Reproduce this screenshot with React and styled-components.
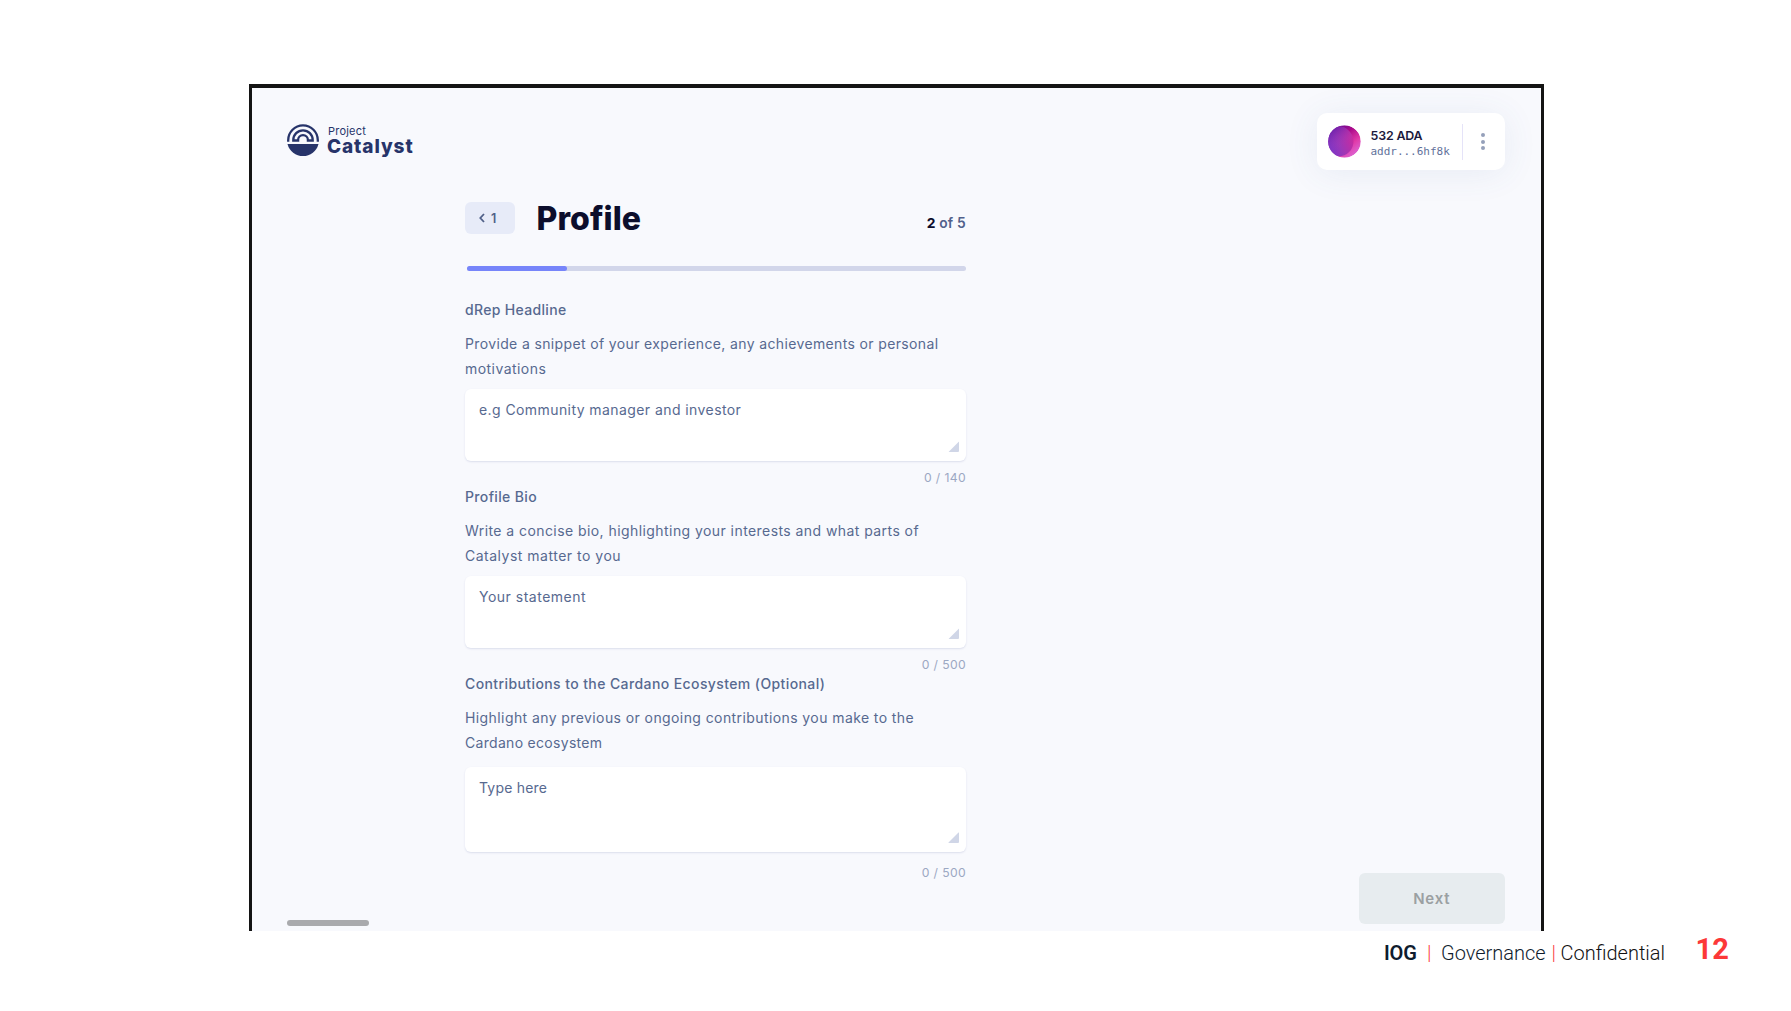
import React from "react";
import styled, { createGlobalStyle } from "styled-components";

const sans = `Inter, "Noto Sans", sans-serif`;

const GlobalStyle = createGlobalStyle`
  * { box-sizing: border-box; }
  body { margin: 0; background: #fff; font-family: ${sans}; }
  h1, p { margin: 0; }
`;

const Slide = styled.div`
  width: 1791px;
  height: 1011px;
  padding-top: 84px;
  overflow: hidden;
  background: #fff;
`;

const AppFrame = styled.section`
  display: flex;
  flex-direction: column;
  width: 1295px;
  height: 847px;
  margin-left: 249px;
  border: solid #141414;
  border-width: 4px 3px 0 3px;
  background: #f8f9fd;
`;

const Header = styled.header`
  display: flex;
  justify-content: space-between;
  align-items: flex-start;
  padding: 25px 36px 0 35px;
`;

const Brand = styled.div`
  display: flex;
  gap: 9px;
  margin-top: 11px;
  color: #27346a;
`;

const BrandName = styled.div`
  display: flex;
  flex-direction: column;
`;

const BrandTop = styled.span`
  font-size: 11px;
  line-height: 14px;
  letter-spacing: 0.22px;
`;

const BrandMain = styled.span`
  margin-left: -1px;
  font-size: 19px;
  font-weight: 800;
  line-height: 18px;
  letter-spacing: 0.9px;
`;

const Wallet = styled.div`
  display: flex;
  align-items: center;
  width: 188px;
  height: 57px;
  padding-left: 10.5px;
  border-radius: 10px;
  background: #fff;
  box-shadow: 0 3px 34px rgba(70, 95, 150, 0.09);
`;

const WalletText = styled.div`
  display: flex;
  flex-direction: column;
  width: 91px;
  margin: 3px 0 0 10px;
`;

const Balance = styled.span`
  color: #1b1a3d;
  font-size: 12.4px;
  font-weight: 600;
  line-height: 17px;
  letter-spacing: -0.15px;
`;

const Address = styled.span`
  color: #61719a;
  font-family: "DejaVu Sans Mono", monospace;
  font-size: 11px;
  line-height: 16px;
  letter-spacing: -0.02px;
`;

const Divider = styled.span`
  width: 1px;
  height: 36px;
  background: #e5e3f8;
`;

const MenuButton = styled.button`
  display: flex;
  flex-direction: column;
  align-items: center;
  gap: 2.4px;
  width: 41px;
  padding: 0;
  border: 0;
  background: none;
`;

const Dot = styled.span`
  width: 4px;
  height: 4px;
  border-radius: 50%;
  background: #95a0ba;
`;

const Body = styled.div`
  display: flex;
  flex: 1;
  justify-content: space-between;
  padding: 32px 36px 0 35px;
`;

const Column = styled.div`
  display: flex;
  flex-direction: column;
  justify-content: space-between;
  padding-bottom: 5px;
`;

const Form = styled.form`
  width: 501px;
  margin-left: 178px;
`;

const TitleRow = styled.div`
  display: flex;
  align-items: center;
  height: 32px;
`;

const BackButton = styled.button`
  display: flex;
  align-items: center;
  gap: 6px;
  width: 50px;
  height: 32px;
  padding: 0 0 0 14px;
  border: 0;
  border-radius: 6px;
  background: #e7ebf8;
  color: #506088;
  font: 600 12.5px ${sans};
`;

const Title = styled.h1`
  margin: 2px 0 0 21.5px;
  color: #0c0e2c;
  font-size: 32px;
  font-weight: 800;
  line-height: 32px;
  letter-spacing: 0.08px;
`;

const Step = styled.p`
  margin: 10px 0 0 auto;
  color: #51618b;
  font-size: 13.8px;
  font-weight: 600;
  line-height: 20px;
  letter-spacing: 0.2px;
`;

const StepNow = styled.span`
  color: #0c0e2c;
  font-weight: 700;
`;

const Track = styled.div`
  height: 5px;
  margin: 32px 0 26px 2px;
  border-radius: 3px;
  background: #d2d6ea;
`;

const Progress = styled.div`
  width: 20%;
  height: 100%;
  border-radius: 3px;
  background: #7785fa;
`;

const Field = styled.div`
  display: flex;
  flex-direction: column;
  color: #576990;
  font-size: 14px;
  line-height: 25px;
`;

const Label = styled.label`
  margin-bottom: 9px;
  font-weight: 500;
  letter-spacing: ${(p) => p.$tracking}px;
`;

const HintLine = styled.span`
  white-space: nowrap;
  letter-spacing: ${(p) => p.$tracking}px;
`;

const InputBox = styled.div`
  position: relative;
  height: ${(p) => (p.$tall ? 85 : 72.4)}px;
  margin: ${(p) => (p.$tall ? "12px 0 13px" : "8px 0 8.6px")};
`;

const Input = styled.textarea`
  display: block;
  width: 100%;
  height: 100%;
  padding: 8px 14px;
  border: 0;
  border-radius: 6px;
  outline: 0;
  resize: none;
  background: #fff;
  box-shadow: 0 1px 2px rgba(72, 86, 150, 0.16);
  font: 400 14px/25px ${sans};
  letter-spacing: ${(p) => p.$tracking}px;

  &::placeholder {
    color: #576990;
    opacity: 1;
  }
`;

const Grip = styled.span`
  position: absolute;
  right: 7px;
  bottom: 9px;
  width: 11px;
  height: 11px;
  border-radius: 1px;
  background: #d0d6e7;
  clip-path: polygon(100% 0, 100% 100%, 0 100%);
`;

const Counter = styled.span`
  height: 14px;
  color: #9ca8c3;
  font-size: 12.2px;
  line-height: 15px;
  letter-spacing: 0.36px;
  text-align: right;
`;

const ScrollThumb = styled.div`
  width: 82px;
  height: 6px;
  border-radius: 3px;
  background: #a9aaad;
`;

const NextButton = styled.button`
  align-self: flex-end;
  width: 146.5px;
  height: 51px;
  margin-bottom: 7px;
  border: 0;
  border-radius: 6px;
  background: #e7ecef;
  color: #9ba0a2;
  font: 600 15px ${sans};
  letter-spacing: 0.75px;
`;

const SlideFooter = styled.footer`
  display: flex;
  align-items: center;
  height: 44px;
  padding-left: 1384px;
  color: #0f1c2e;
  font: 300 20px/24px Roboto, sans-serif;
`;

const Org = styled.span`
  width: 43px;
  font-weight: 600;
  letter-spacing: -0.15px;
`;

const Bar = styled.span`
  width: ${(p) => p.$width}px;
  color: #fb4343;
`;

const Area = styled.span`
  width: 110.5px;
`;

const Privacy = styled.span`
  width: 135px;
  color: #111;
`;

const PageNumber = styled.span`
  margin-bottom: 8px;
  color: #fc3838;
  font-size: 29px;
  font-weight: 700;
`;

const LogoMark = () => (
  <svg width="32" height="33" viewBox="0 0 32 33">
    <g fill="none" stroke="currentColor" strokeWidth="2.3">
      <path d="M1.2 17.8V16.2a14.8 14.8 0 0 1 29.6 0V17.8" />
      <path d="M6.3 16.5V16a9.7 9.7 0 0 1 19.4 0V16.5H20.9V16a4.9 4.9 0 0 0-9.8 0V16.5Z" />
    </g>
    <path d="M.5 20H31.5A16 16 0 0 1 .5 20Z" fill="currentColor" />
  </svg>
);

const Avatar = () => (
  <svg width="33" height="33" viewBox="0 0 33 33">
    <defs>
      <linearGradient id="outer" x1="0.2" y1="0" x2="0.85" y2="0.8">
        <stop offset="0" stopColor="#5a109c" />
        <stop offset="0.4" stopColor="#ab0a8a" />
        <stop offset="0.75" stopColor="#e03aa8" />
        <stop offset="1" stopColor="#dd5cca" />
      </linearGradient>
      <linearGradient id="inner" x1="0" y1="0.7" x2="1" y2="0.3">
        <stop offset="0" stopColor="#6d35cc" />
        <stop offset="0.5" stopColor="#9c37b8" />
        <stop offset="1" stopColor="#cc2a9e" />
      </linearGradient>
      <linearGradient id="shade" x1="0.1" y1="0" x2="0.55" y2="0.7">
        <stop offset="0" stopColor="#5010a0" />
        <stop offset="1" stopColor="#a040c0" stopOpacity="0" />
      </linearGradient>
      <clipPath id="disc"><circle cx="16.5" cy="16.5" r="16.3" /></clipPath>
    </defs>
    <g clipPath="url(#disc)">
      <circle cx="16.5" cy="16.5" r="16.3" fill="url(#outer)" />
      <circle cx="10.5" cy="16.5" r="15" fill="url(#inner)" />
      <circle cx="10.5" cy="16.5" r="15" fill="url(#shade)" />
    </g>
  </svg>
);

const ChevronLeft = () => (
  <svg width="6" height="10" viewBox="0 0 6 10">
    <path d="M5 1 1.3 5 5 9" fill="none" stroke="currentColor" strokeWidth="1.8" />
  </svg>
);

const fields = [
  {
    id: "headline",
    label: ["dRep Headline", 0.33],
    hint: [
      ["Provide a snippet of your experience, any achievements or personal", 0.36],
      ["motivations", 0.45],
    ],
    placeholder: ["e.g Community manager and investor", 0.42],
    limit: 140,
  },
  {
    id: "bio",
    label: ["Profile Bio", 0.35],
    hint: [
      ["Write a concise bio, highlighting your interests and what parts of", 0.43],
      ["Catalyst matter to you", 0.5],
    ],
    placeholder: ["Your statement", 0.5],
    limit: 500,
  },
  {
    id: "contributions",
    label: ["Contributions to the Cardano Ecosystem (Optional)", 0.4],
    hint: [
      ["Highlight any previous or ongoing contributions you make to the", 0.41],
      ["Cardano ecosystem", 0.3],
    ],
    placeholder: ["Type here", 0.2],
    limit: 500,
    tall: true,
  },
];

export default function App() {
  return (
    <Slide>
      <GlobalStyle />
      <AppFrame>
        <Header>
          <Brand>
            <LogoMark />
            <BrandName>
              <BrandTop>Project</BrandTop>
              <BrandMain>Catalyst</BrandMain>
            </BrandName>
          </Brand>
          <Wallet>
            <Avatar />
            <WalletText>
              <Balance>532 ADA</Balance>
              <Address>addr...6hf8k</Address>
            </WalletText>
            <Divider />
            <MenuButton type="button" aria-label="Menu">
              <Dot />
              <Dot />
              <Dot />
            </MenuButton>
          </Wallet>
        </Header>
        <Body>
          <Column>
            <Form>
              <TitleRow>
                <BackButton type="button">
                  <ChevronLeft />1
                </BackButton>
                <Title>Profile</Title>
                <Step>
                  <StepNow>2</StepNow> of 5
                </Step>
              </TitleRow>
              <Track>
                <Progress />
              </Track>
              {fields.map((f) => (
                <Field key={f.id}>
                  <Label htmlFor={f.id} $tracking={f.label[1]}>{f.label[0]}</Label>
                  {f.hint.map(([text, tracking]) => (
                    <HintLine key={text} $tracking={tracking}>{text}</HintLine>
                  ))}
                  <InputBox $tall={f.tall}>
                    <Input id={f.id} placeholder={f.placeholder[0]} $tracking={f.placeholder[1]} />
                    <Grip />
                  </InputBox>
                  <Counter>0 / {f.limit}</Counter>
                </Field>
              ))}
            </Form>
            <ScrollThumb />
          </Column>
          <NextButton type="button">Next</NextButton>
        </Body>
      </AppFrame>
      <SlideFooter>
        <Org>IOG</Org>
        <Bar $width={14}>|</Bar>
        <Area>Governance</Area>
        <Bar $width={9}>|</Bar>
        <Privacy>Confidential</Privacy>
        <PageNumber>12</PageNumber>
      </SlideFooter>
    </Slide>
  );
}
